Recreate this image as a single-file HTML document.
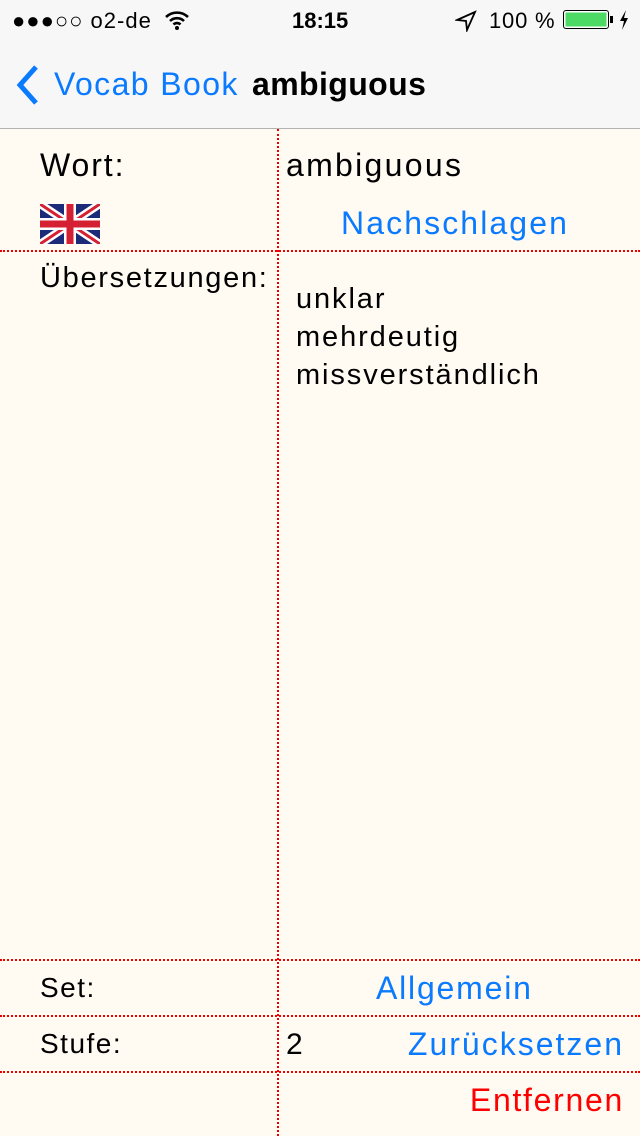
<!DOCTYPE html>
<html><head><meta charset="utf-8"><style>
body{margin:0;width:640px;height:1136px;background:#fffaf2;font-family:"Liberation Sans",sans-serif;position:relative;overflow:hidden}
.a{position:absolute;white-space:nowrap}
.hl{position:absolute;left:0;width:640px;border-top:2px dotted #e00}
.blue{color:#0a7afe}
.w{letter-spacing:1.9px}
</style></head><body>
<div class="a" style="left:0;top:0;width:640px;height:128px;background:#f7f7f7;border-bottom:1px solid #b2b2b2"></div>
<div class="a" style="left:12px;top:8px;font-size:22px;letter-spacing:1px">●●●○○ o2-de</div>
<svg class="a" style="left:164px;top:10px" width="26" height="20" viewBox="0 0 26 20"><path d="M2 7a16 16 0 0 1 22 0M6 11a10 10 0 0 1 14 0M9.5 14.5a5 5 0 0 1 7 0" stroke="#000" stroke-width="2.6" fill="none"/><circle cx="13" cy="18" r="2" fill="#000"/></svg>
<div class="a" style="left:292px;top:8px;font-size:22px;font-weight:bold">18:15</div>
<svg class="a" style="left:455px;top:10px" width="22" height="22" viewBox="0 0 22 22"><path d="M20 2L2 10l9 1 1 9z" stroke="#000" stroke-width="1.8" fill="none"/></svg>
<div class="a" style="left:489px;top:8px;font-size:22px;letter-spacing:0.8px">100 %</div>
<div class="a" style="left:563px;top:10px;width:44px;height:17px;border:1.5px solid #000;border-radius:3px;background:#4cd964;box-shadow:inset 0 0 0 1.5px #fff"></div>
<div class="a" style="left:610px;top:16px;width:3px;height:7px;background:#000"></div>
<svg class="a" style="left:618px;top:9px" width="12" height="22" viewBox="0 0 12 22"><path d="M8 1L2 12h4l-2 9 6-12H6z" fill="#000"/></svg>
<svg class="a" style="left:14px;top:64px" width="28" height="42" viewBox="0 0 28 42"><path d="M22 3L6 21l16 18" stroke="#0a7afe" stroke-width="5" fill="none"/></svg>
<div class="a blue" style="left:54px;top:66px;font-size:32px;letter-spacing:1.4px">Vocab Book</div>
<div class="a" style="left:252px;top:66px;font-size:32px;font-weight:bold;letter-spacing:0.4px">ambiguous</div>

<div class="a" style="left:277px;top:129px;height:1007px;border-left:2px dotted #e00"></div>
<div class="hl" style="top:250px"></div>
<div class="hl" style="top:959px"></div>
<div class="hl" style="top:1015px"></div>
<div class="hl" style="top:1071px"></div>

<div class="a w" style="left:40px;top:147px;font-size:32px">Wort:</div>
<div class="a" style="left:286px;top:147px;font-size:32px;letter-spacing:2.3px">ambiguous</div>
<svg class="a" style="left:40px;top:204px" width="60" height="40" viewBox="0 0 60 40"><rect width="60" height="40" fill="#1c2a7a"/><path d="M0 0L60 40M60 0L0 40" stroke="#fff" stroke-width="8"/><path d="M0 0L60 40M60 0L0 40" stroke="#d42032" stroke-width="3"/><path d="M30 0V40M0 20H60" stroke="#fff" stroke-width="12"/><path d="M30 0V40M0 20H60" stroke="#d42032" stroke-width="7"/></svg>
<div class="a blue" style="left:341px;top:205px;font-size:32px;letter-spacing:2.1px">Nachschlagen</div>
<div class="a" style="left:40px;top:262px;font-size:29px;letter-spacing:1.7px">Übersetzungen:</div>
<div class="a" style="left:296px;top:280px;font-size:29px;line-height:38px;letter-spacing:1.9px">unklar<br>mehrdeutig<br>missverständlich</div>
<div class="a" style="left:40px;top:972px;font-size:28px;letter-spacing:1.5px">Set:</div>
<div class="a blue" style="left:376px;top:970px;font-size:32px;letter-spacing:1.8px">Allgemein</div>
<div class="a" style="left:40px;top:1028px;font-size:28px;letter-spacing:1.5px">Stufe:</div>
<div class="a" style="left:286px;top:1028px;font-size:30px">2</div>
<div class="a blue" style="right:16px;top:1026px;font-size:32px;letter-spacing:2px">Zurücksetzen</div>
<div class="a" style="right:16px;top:1082px;font-size:32px;color:#f00;letter-spacing:1.7px">Entfernen</div>
</body></html>
